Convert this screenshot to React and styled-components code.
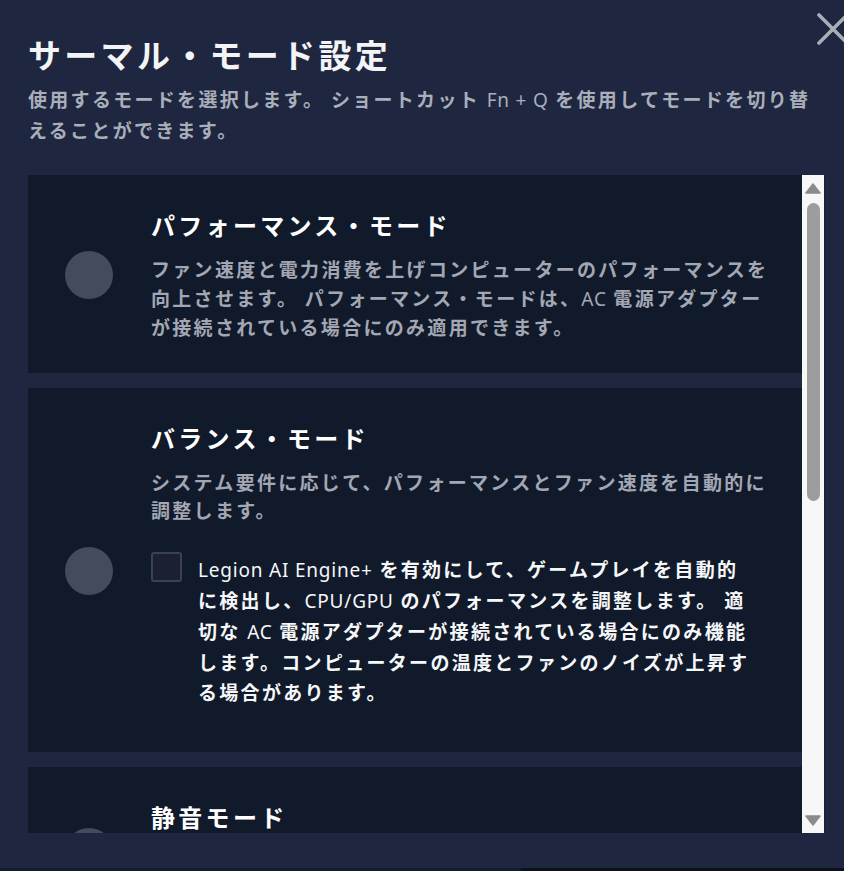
import React from "react";
import styled, { createGlobalStyle } from "styled-components";

const GlobalStyle = createGlobalStyle`
  html, body {
    margin: 0;
    padding: 0;
    overflow: hidden;
    background: #1e2640;
  }
  body {
    font-family: "Noto Sans CJK JP", "Noto Sans", sans-serif;
    -webkit-font-smoothing: antialiased;
  }
`;

const Page = styled.div`
  height: 871px;
  display: flex;
  flex-direction: column;
  background: #1e2640;
`;

const Window = styled.div`
  position: relative;
  flex: 1;
  padding: 34px 0 0 28px;
  box-sizing: border-box;
  overflow: hidden;
`;

const CloseButton = styled.button`
  position: absolute;
  top: 10px;
  right: -9px;
  width: 40px;
  height: 38px;
  padding: 0;
  border: 0;
  background: transparent;
  cursor: pointer;
  display: flex;
  align-items: center;
  justify-content: center;
`;

const Title = styled.h1`
  margin: 0 0 10px;
  font-size: 33px;
  line-height: 40px;
  letter-spacing: 3.3px;
  font-weight: 700;
  color: #f3f4f6;
`;

const Subtitle = styled.p`
  margin: 0;
  width: 796px;
  font-size: 19px;
  line-height: 30px;
  letter-spacing: 2.3px;
  font-weight: 700;
  color: #a9aebb;
`;

const Latin = styled.span`
  font-family: "Noto Sans", "Open Sans", sans-serif;
  font-weight: 400;
  letter-spacing: 0.8px;
`;

const ScrollArea = styled.div`
  margin-top: 30px;
  width: 797px;
  height: 658px;
  display: flex;
`;

const List = styled.div`
  flex: 1;
  overflow: hidden;
  display: flex;
  flex-direction: column;
  gap: 15px;
`;

const Card = styled.div`
  flex-shrink: 0;
  display: flex;
  align-items: center;
  background: #111a2b;
  padding: 34px 25px 31px 37px;
`;

const Radio = styled.div`
  flex-shrink: 0;
  width: 48px;
  height: 48px;
  border-radius: 50%;
  background: #444b5b;
  margin-right: 38px;
`;

const CardBody = styled.div`
  width: 625px;
`;

const CardTitle = styled.h2`
  margin: 0;
  font-size: 24px;
  line-height: 32px;
  letter-spacing: 3.3px;
  font-weight: 700;
  color: #ffffff;
`;

const Desc = styled.p`
  margin: 14px 0 0;
  font-size: 19px;
  line-height: 28.5px;
  letter-spacing: 2.3px;
  font-weight: 700;
  color: #a2a7b3;
`;

const OptionRow = styled.label`
  display: flex;
  align-items: flex-start;
  gap: 16px;
  margin: 27px 0 14px;
`;

const CheckBox = styled.span`
  flex-shrink: 0;
  width: 31px;
  height: 30px;
  box-sizing: border-box;
  border: 2px solid #394152;
  border-radius: 3px;
  background: #1c2132;
`;

const OptionText = styled.span`
  width: 560px;
  padding-top: 2px;
  font-size: 19px;
  line-height: 30px;
  letter-spacing: 2.3px;
  font-weight: 700;
  color: #f6f7f9;
`;

const Scrollbar = styled.div`
  width: 23px;
  flex-shrink: 0;
  background: #f7f7f7;
  border-right: 1px solid #1a2031;
  display: flex;
  flex-direction: column;
  align-items: center;
  padding: 8px 0 7px;
  box-sizing: border-box;
`;

const Thumb = styled.div`
  width: 13px;
  height: 298px;
  margin-top: 9px;
  border-radius: 7px;
  background: #9d9d9d;
`;

const Spacer = styled.div`
  flex: 1;
`;

const BottomEdge = styled.div`
  height: 3px;
  display: flex;
`;

const EdgePart = styled.div`
  width: ${(p) => p.$w || "auto"};
  flex: ${(p) => (p.$w ? "none" : 1)};
  background: ${(p) => p.$c};
`;

const Arrow = ({ down }) => (
  <svg width="16" height="11" viewBox="0 0 16 11" aria-hidden="true">
    <polygon
      points={down ? "1,1 15,1 8,10" : "8,1 15,10 1,10"}
      fill="#8b8b8b"
      stroke="#8b8b8b"
      strokeWidth="1.5"
      strokeLinejoin="round"
    />
  </svg>
);

export default function App() {
  return (
    <Page lang="ja">
      <GlobalStyle />
      <Window>
        <CloseButton aria-label="閉じる">
          <svg width="34" height="34" viewBox="0 0 34 34">
            <path
              d="M3 3 L31 31 M31 3 L3 31"
              stroke="#a8adb7"
              strokeWidth="3.6"
              strokeLinecap="round"
            />
          </svg>
        </CloseButton>
        <Title>サーマル・モード設定</Title>
        <Subtitle>
          使用するモードを選択します。 ショートカット{" "}
          <Latin>Fn + Q</Latin> を使用してモードを切り替えることができます。
        </Subtitle>
        <ScrollArea>
          <List>
            <Card>
              <Radio />
              <CardBody>
                <CardTitle>パフォーマンス・モード</CardTitle>
                <Desc>
                  ファン速度と電力消費を上げコンピューターのパフォーマンスを向上させます。
                  パフォーマンス・モードは、<Latin>AC</Latin> 電源アダプターが接続されている場合にのみ適用できます。
                </Desc>
              </CardBody>
            </Card>
            <Card>
              <Radio />
              <CardBody>
                <CardTitle>バランス・モード</CardTitle>
                <Desc>
                  システム要件に応じて、パフォーマンスとファン速度を自動的に調整します。
                </Desc>
                <OptionRow>
                  <CheckBox />
                  <OptionText>
                    <Latin>Legion AI Engine+</Latin> を有効にして、ゲームプレイを自動的に検出し、
                    <Latin>CPU/GPU</Latin> のパフォーマンスを調整します。 適切な{" "}
                    <Latin>AC</Latin> 電源アダプターが接続されている場合にのみ機能します。コンピューターの温度とファンのノイズが上昇する場合があります。
                  </OptionText>
                </OptionRow>
              </CardBody>
            </Card>
            <Card>
              <Radio />
              <CardBody>
                <CardTitle>静音モード</CardTitle>
                <Desc>
                  ファン速度と電力消費を抑えて、コンピューターを静かに動作させます。
                </Desc>
              </CardBody>
            </Card>
          </List>
          <Scrollbar>
            <Arrow />
            <Thumb />
            <Spacer />
            <Arrow down />
          </Scrollbar>
        </ScrollArea>
      </Window>
      <BottomEdge>
        <EdgePart $w="521px" $c="#161c2c" />
        <EdgePart $c="#0d111c" />
      </BottomEdge>
    </Page>
  );
}
